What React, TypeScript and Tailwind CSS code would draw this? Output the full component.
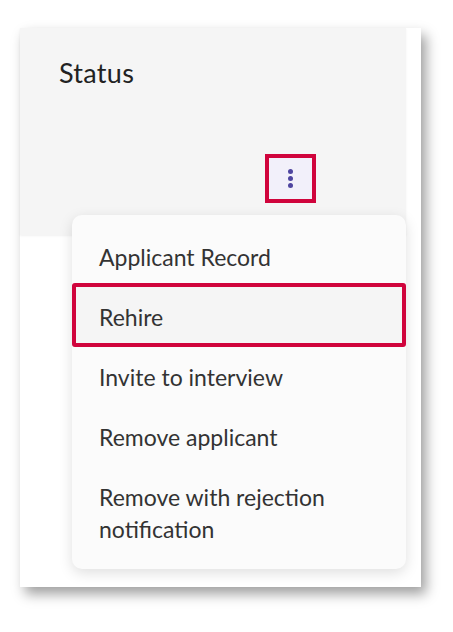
const items = ["Applicant Record", "Rehire", "Invite to interview", "Remove applicant"];

export default function App() {
  return (
    <div className="w-[453px] h-[632px] bg-white pt-[28px] pl-[20px]" style={{ fontFamily: "Lato, 'Noto Sans', sans-serif" }}>
      <div className="relative w-[401px] h-[559px] bg-white shadow-[5px_7px_12px_rgba(0,0,0,0.38)]">
        <div className="w-[386px] h-[207px] bg-[#f5f5f5] shadow-[0_1px_2px_rgba(0,0,0,0.06)] pt-[28px] pl-[39px]">
          <h2 className="text-[27px] leading-[34px] tracking-[0.3px] text-[#222]">Status</h2>
          <div className="ml-[206px] mt-[64px] w-[51px] h-[49px] border-4 border-[#d0043c] bg-[#f2f0fa] flex flex-col items-center justify-center gap-[2px]">
            <span className="w-[5px] h-[5px] rounded-full bg-[#4f45a0]" />
            <span className="w-[5px] h-[5px] rounded-full bg-[#4f45a0]" />
            <span className="w-[5px] h-[5px] rounded-full bg-[#4f45a0]" />
          </div>
        </div>
        <div className="absolute left-[52px] top-[187px] w-[334px] bg-[#fbfbfb] rounded-[10px] shadow-[0_4px_14px_rgba(0,0,0,0.13)] pt-[12px] pb-[10px] text-[23px] leading-[32px] text-[#333]">
          {items.map((label) => (
            <div key={label} className="relative px-[27px] py-[14px]">
              {label === "Rehire" && (
                <span className="absolute -top-[4px] bottom-0 left-0 right-0 border-4 border-[#d0043c] rounded-[3px] bg-[#f5f5f5]" />
              )}
              <span className="relative">{label}</span>
            </div>
          ))}
          <div className="px-[27px] py-[14px]">
            Remove with rejection
            <br />
            notification
          </div>
        </div>
      </div>
    </div>
  );
}
